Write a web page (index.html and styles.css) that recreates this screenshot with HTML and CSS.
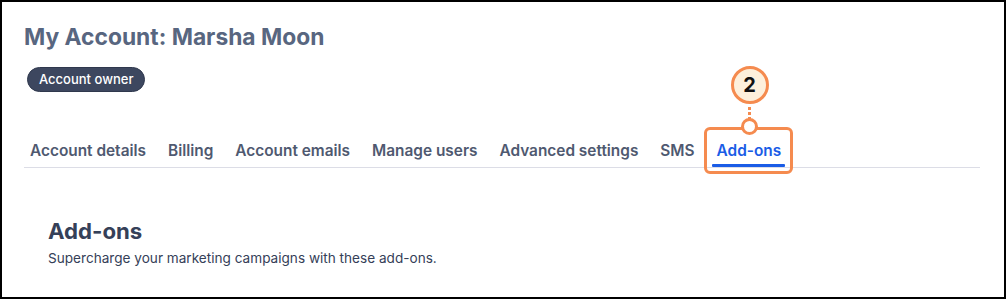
FILE: index.html
```html
<!DOCTYPE html>
<html>
<head>
<meta charset="utf-8">
<link rel="stylesheet" href="styles.css">
</head>
<body>
<div class="frame">
  <header class="head">
    <h1 class="title">My Account: Marsha Moon</h1>
    <span class="badge">Account owner</span>
  </header>
  <nav class="tabs">
    <a class="tab">Account details</a>
    <a class="tab">Billing</a>
    <a class="tab">Account emails</a>
    <a class="tab">Manage users</a>
    <a class="tab">Advanced settings</a>
    <a class="tab">SMS</a>
    <a class="tab active">Add-ons
      <span class="callout">
        <span class="callout-num">2</span>
        <span class="callout-dots"></span>
        <span class="callout-ring"></span>
        <span class="callout-box"></span>
      </span>
    </a>
  </nav>
  <section class="content">
    <h2 class="sub-title">Add-ons</h2>
    <p class="sub-text">Supercharge your marketing campaigns with these add-ons.</p>
  </section>
</div>
</body>
</html>
```
FILE: styles.css
```css
* { box-sizing: border-box; }
html, body { margin: 0; padding: 0; background: #fff; }
body { font-family: "Inter", "Liberation Sans", sans-serif; }
.frame {
  width: 1006px;
  height: 299px;
  border: 2px solid #000;
  padding: 0 24px 0 22px;
  overflow: hidden;
}
.head { padding-top: 21px; }
.title {
  margin: 0;
  font-size: 22.8px;
  font-weight: 700;
  color: #586680;
  line-height: 28px;
}
.badge {
  display: inline-block;
  margin-top: 16px;
  margin-left: 3px;
  height: 25px;
  line-height: 23px;
  padding: 0 11px;
  border-radius: 13px;
  background: #3d475f;
  border: 1px solid #2f384d;
  color: #fff;
  font-size: 13px;
  font-weight: 500;
}
.tabs {
  display: flex;
  gap: 22px;
  margin-top: 49px;
  padding-left: 6px;
  border-bottom: 1px solid #dcdde6;
  width: 956px;
}
.tab {
  position: relative;
  font-size: 15.4px;
  font-weight: 600;
  color: #4f5970;
  padding-bottom: 6px;
  line-height: 20px;
}
.tab.active { color: #1a5ce6; }
.tab.active::after {
  content: "";
  position: absolute;
  left: -5px;
  right: -4px;
  bottom: 0;
  height: 3px;
  background: #1a5ce6;
  border-radius: 1px;
}
.callout { position: absolute; left: 0; top: 0; }
.callout-box {
  position: absolute;
  left: -13px;
  top: -14px;
  width: 89px;
  height: 47px;
  border: 3px solid #f58b4f;
  border-radius: 6px;
}
.callout-ring {
  position: absolute;
  left: 24px;
  top: -23px;
  width: 17px;
  height: 17px;
  border: 3px solid #f58b4f;
  border-radius: 50%;
  background: #fff;
  z-index: 2;
}
.callout-dots {
  position: absolute;
  left: 31px;
  top: -34px;
  width: 3px;
  height: 12px;
  background: repeating-linear-gradient(to bottom, #f58b4f 0 3px, transparent 3px 5px);
}
.callout-num {
  position: absolute;
  left: 14px;
  top: -75px;
  width: 38px;
  height: 38px;
  border: 3px solid #f58b4f;
  border-radius: 50%;
  background: #fdf0dc;
  color: #111;
  font-size: 20px;
  font-weight: 700;
  display: flex;
  align-items: center;
  justify-content: center;
}
.content { padding: 49px 0 0 24px; }
.sub-title {
  margin: 0;
  font-size: 22.2px;
  font-weight: 700;
  color: #354058;
  line-height: 28px;
}
.sub-text {
  margin: 5px 0 0;
  font-size: 13.6px;
  color: #354058;
}
```
